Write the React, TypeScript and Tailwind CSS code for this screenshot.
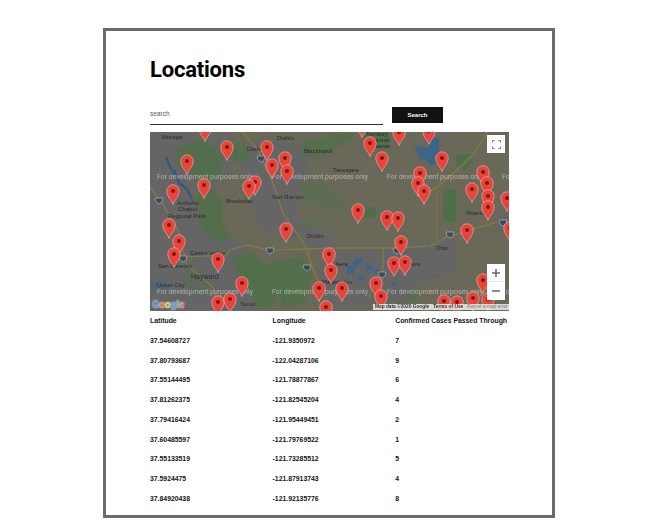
import React from "react";

const pins: [number, number][] = [
  [205, 128], [227, 147], [187, 161], [267, 147], [285, 158], [272, 165], [287, 171], [255, 182], [249, 186], [204, 185], [173, 191],
  [169, 225], [179, 241], [174, 254], [218, 259], [286, 229], [242, 283], [218, 302], [230, 299], [329, 254], [331, 270], [319, 288], [326, 307],
  [362, 124], [370, 143], [399, 132], [429, 131], [382, 158], [442, 158], [420, 173], [418, 183], [424, 191], [483, 172], [487, 183], [472, 189], [488, 196], [488, 207], [507, 198], [510, 228],
  [358, 210], [387, 217], [398, 218], [401, 242], [394, 263], [405, 262], [467, 230], [342, 288], [376, 283], [381, 296], [444, 301], [457, 302], [473, 298], [483, 280], [488, 299],
];

const rows = [
  ["37.54608727", "-121.9350972", "7"],
  ["37.80793687", "-122.04287106", "9"],
  ["37.55144495", "-121.78877867", "6"],
  ["37.81262375", "-121.82545204", "4"],
  ["37.79416424", "-121.95449451", "2"],
  ["37.60485597", "-121.79769522", "1"],
  ["37.55133519", "-121.73285512", "5"],
  ["37.5924475", "-121.87913743", "4"],
  ["37.84920438", "-121.92135776", "8"],
];

const labels: [string, number, number][] = [
  ["Moraga", 162, 138.5], ["Danville", 247, 151], ["Diablo", 277, 140], ["Blackhawk", 304, 153],
  ["Tassajara", 333, 172], ["Territory", 366, 136], ["Regional", 366, 142], ["Preserve", 366, 148],
  ["Anthony", 177, 205], ["Chabot", 178, 211], ["Regional Park", 168, 218],
  ["Brookside", 226, 203], ["San Ramon", 272, 199], ["Dublin", 307, 238], ["Castro Valley", 190, 255],
  ["San Lorenzo", 158, 268], ["Union City", 157, 287], ["Altamont", 466, 215],
  ["Ohio", 436, 250], ["Livermore", 394, 266], ["Aera", 335, 266], ["Pleasanton", 322, 284], ["Sunol", 240, 306],
];

const shields: [number, number][] = [[261, 158], [159, 200], [183, 258], [270, 250], [307, 267], [397, 250], [450, 234], [382, 274], [503, 222]];

function MapArt() {
  return (
    <svg className="absolute left-0 top-0" width="359" height="179" viewBox="150 132 359 179">
      <defs>
        <filter id="soft" x="-10%" y="-10%" width="120%" height="120%">
          <feGaussianBlur stdDeviation="1.6" />
        </filter>
      </defs>
      <rect x="150" y="132" width="359" height="179" fill="#6a6959" />
      <g filter="url(#soft)">
        <g fill="#656566">
          <path d="M140 125h50l6 20-10 30 12 40 20 22 30 6-6 26 20 20-6 30h-120z" />
          <path d="M244 145l40-6 26 14-6 30-8 18 8 30-10 10-34-14-12-30-6-30z" />
          <path d="M326 252l100-6 30 2-6 26-30 10-14 18-70 6-20-24z" />
          <path d="M304 229l28 0 4 18-32 2z" />
          <path d="M434 240l20-2 2 36-22 2z" />
          <path d="M150 132h80l10 20-12 30-20 10-60 0z" opacity=".7" />
          <path d="M496 215h14v16h-12z" />
        </g>
        <g fill="#4f7049">
          <path d="M176 148l28-10 20 18-4 22-16 8-12-14-16-6z" opacity=".8" />
          <path d="M196 195l16-6 12 14-2 22 10 12-16 6-16-20z" opacity=".85" />
          <path d="M226 140l20 2 6 16-14 6-12-12z" opacity=".7" />
          <path d="M300 140l32-4 10 10-26 14-14-6z" opacity=".65" />
          <path d="M296 182l30 0 12 16-14 12-22-10z" opacity=".45" />
          <path d="M232 258l20-6 16 14 8 20-2 20-16 4-14-24z" opacity=".9" />
          <path d="M270 262l30-6 12 18-6 30-22 4-14-24z" opacity=".8" />
          <path d="M364 132h26l-2 16-22 2z" opacity=".9" />
          <path d="M330 136l22-2 2 8-24 2z" opacity=".7" />
          <path d="M330 198l14-2 2 14-16 4z" opacity=".35" />
          <path d="M304 222l18 -4 4 8-20 4z" opacity=".4" />
          <path d="M182 268l20 4 12 16-20 10-10-16z" opacity=".3" />
          <path d="M406 290l12-2 2 12-14 2z" opacity=".6" />
        </g>
      </g>
      <g fill="#4a7048">
        <path d="M456 155l14-1 3 8-8 9-9-5z" opacity=".9" />
        <path d="M444 189h12v33h-13z" opacity=".9" />
        <path d="M365 207h11v11h-11z" opacity=".85" />
      </g>
      <g fill="#3d6489">
        <path d="M414 146l14 2 1-9 10-2 0 14 -2 6 2 4-8 5-5-6-6-1-3-7z" />
        <path d="M347 266l7-1 1 8-8 1zM353 263l3-3 3 3-3 6z" opacity=".9" />
        <path d="M355 259l7-2 1 5-6 3z" />
        <path d="M366 263l6 2 1 4-6 2zM374 269l6 0 0 4-5 1z" />
        <path d="M372 283l6-1 0 5-5 0zM358 277l5-1 1 4-5 1z" />
        <path d="M392 282l5 0 0 4-4 0z" opacity=".7" />
        <path d="M150 282l16-2 2 8-18 4z" opacity=".35" />
      </g>
      <path d="M166 157l4 10 6 8 3 8 8 6 4 8" stroke="#34597f" strokeWidth="2.200" fill="none" />
      <path d="M191 197l3 7M176 170l-6 6" stroke="#34597f" strokeWidth="1.200" fill="none" />
      <g fill="none" stroke="#8c7e3a" strokeWidth="1.100">
        <path d="M243 132l15 18 4 10 8 15 13 38 13 19 9 13 8 24 7 16" />
        <path d="M150 187l10 13 18 30 9 35 26 22 8 24" />
        <path d="M183 257l44-2 3-5 17-5 23 5 37-1 23-1 67 0 33-2 17-9 23-7 27-8" />
        <path d="M487 133l-14 22-16 15-20 17-10 6" />
        <path d="M437 187v58" stroke="#7f7538" />
        <path d="M383 248v31l-10 6-4 14" />
        <path d="M164 238l24 16 16 36" stroke="#75703f" strokeWidth=".800" />
      </g>
      <g fill="#3d4c5c" stroke="#d5d5d5" strokeWidth=".500">
        {shields.map(([x, y]) => (
          <path key={`${x}${y}`} d={`M${x - 3.500} ${y - 2}h7c.6 2.500-.5 4.800-3.500 6c-3-1.200-4.100-3.500-3.500-6z`} />
        ))}
      </g>
      <g fontFamily="'Liberation Sans', sans-serif" fontSize="6" fill="#2a2a2a">
        {labels.map(([t, x, y]) => (
          <text key={t} x={x} y={y}>{t}</text>
        ))}
        <text x="191" y="278.500" fontSize="7">Hayward</text>
      </g>
      <g fill="#f4f4f4" fillOpacity=".5" fontFamily="Roboto, sans-serif" fontSize="6.900">
        {[157, 272, 387, 502].flatMap((x) =>
          [178.500, 294].map((y) => (
            <text key={`${x}-${y}`} x={x} y={y}>For development purposes only</text>
          )),
        )}
      </g>
      {pins.map(([x, y], i) => (
        <g key={i} transform={`translate(${x} ${y})`}>
          <path d="M0 13.500C-1 9.500-6.200 6-6.200 0A6.200 6.200 0 0 1 6.200 0C6.200 6 1 9.500 0 13.500Z" fill="#e8443a" stroke="#f7d5d0" strokeWidth=".500" />
          <circle r="2" fill="#7e1612" />
        </g>
      ))}
    </svg>
  );
}

export default function App() {
  return (
    <div className="w-[658px] h-[530px] bg-white pt-7 font-['Liberation_Sans',sans-serif] blur-[0.35px]">
      <div className="ml-[103px] w-[452px] h-[490px] border-[3px] border-[#6b6b6b] pl-[44px] overflow-hidden">
        <h1 className="mt-[25px] h-[28px] text-[22px] leading-[28px] font-bold text-black font-['Roboto',sans-serif] tracking-[-0.2px]">Locations</h1>
        <div className="mt-[23px] flex items-start h-[25px]">
          <div className="w-[233px] h-[18px] border-b-[1.5px] border-[#333] text-[6.5px] leading-[13px] text-[#555]">search</div>
          <button className="ml-[9px] w-[51px] h-[16px] bg-[#111] text-white text-[6px] font-bold rounded-none">Search</button>
        </div>
        <div className="relative w-[359px] h-[179px] overflow-hidden">
          <MapArt />
          <div className="absolute left-[337px] top-[3px] w-[18px] h-[18px] bg-white flex items-center justify-center">
            <svg width="9" height="9" viewBox="0 0 9 9" fill="none" stroke="#777" strokeWidth="1">
              <path d="M.5 2.500V.5H2.500M6.500 .5h2V2.500M8.500 6.500v2H6.500M2.500 8.500H.5V6.500" />
            </svg>
          </div>
          <div className="absolute left-[337px] top-[132px] w-[18px] h-[36px] bg-white flex flex-col items-center">
            <div className="h-[18px] flex items-center justify-center border-b border-[#e6e6e6] w-[14px]">
              <svg width="8" height="8" viewBox="0 0 8 8" stroke="#666" strokeWidth="1.500"><path d="M4 0v8M0 4h8" /></svg>
            </div>
            <div className="h-[18px] flex items-center justify-center">
              <svg width="8" height="8" viewBox="0 0 8 8" stroke="#666" strokeWidth="1.500"><path d="M0 4h8" /></svg>
            </div>
          </div>
          <div className="absolute left-[2px] bottom-[1px] text-[10.5px] leading-[11px] font-bold font-['Roboto',sans-serif] tracking-[-0.2px] [text-shadow:0_0_1.5px_#fff]">
            <span className="text-[#5d93d6]">G</span><span className="text-[#e07a70]">o</span><span className="text-[#e6c860]">o</span><span className="text-[#5d93d6]">g</span><span className="text-[#6db57f]">l</span><span className="text-[#e07a70]">e</span>
          </div>
          <div className="absolute right-0 bottom-[1px] w-[136px] h-[6px] bg-[#e5e5e5]/90 flex items-center gap-[4px] pl-[2px] text-[4.8px] leading-[6px] text-[#333] whitespace-nowrap">
            <span className="font-bold">Map data ©2020 Google</span>
            <span className="font-bold">Terms of Use</span>
            <span className="text-[#777]">Report a map error</span>
          </div>
        </div>
        <div className="w-[360px] mt-[0.5px] text-[6.85px] font-bold text-[#111] whitespace-nowrap">
          {[["Latitude", "Longitude", "Confirmed Cases Passed Through"], ...rows].map((r, i) => (
            <div key={i} className="grid grid-cols-[122.6px_122.6px_1fr] h-[19.75px] items-center">
              <span>{r[0]}</span>
              <span>{r[1]}</span>
              <span>{r[2]}</span>
            </div>
          ))}
        </div>
      </div>
    </div>
  );
}
